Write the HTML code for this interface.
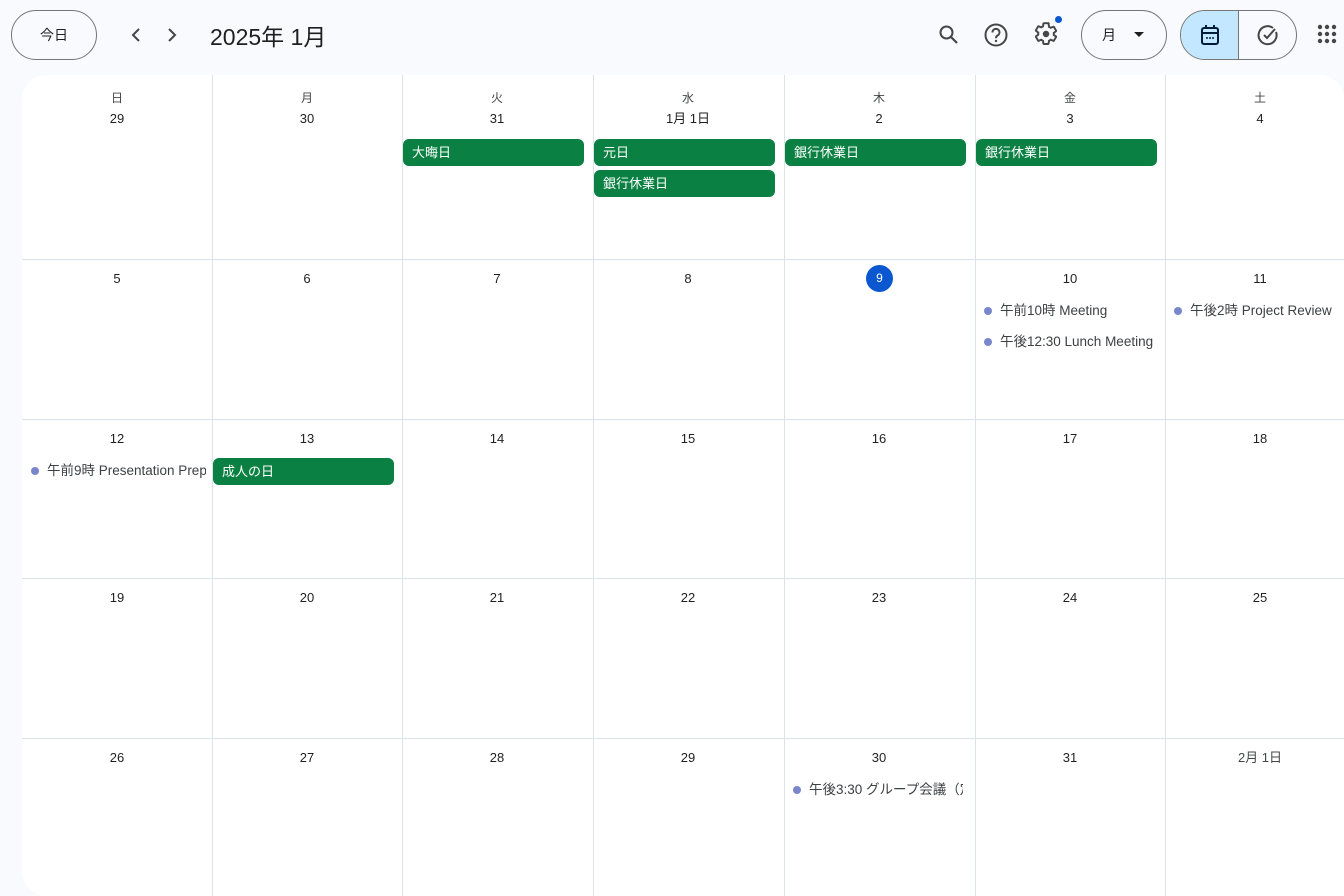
<!DOCTYPE html>
<html><head><meta charset="utf-8"><style>
*{margin:0;padding:0;box-sizing:border-box}
body{width:1344px;height:896px;overflow:hidden;background:#f8fafd;font-family:"Liberation Sans","Noto Sans CJK JP",sans-serif;color:#1f1f1f;position:relative}
.abs{position:absolute}
.btn{position:absolute;border:1px solid #747775;border-radius:26px;background:#f8fafd;display:flex;align-items:center;justify-content:center;font-size:14px;color:#1f1f1f}
.card{position:absolute;left:22px;top:75px;width:1322px;height:821px;background:#fff;border-radius:24px 24px 0 24px;overflow:hidden}
.vl{position:absolute;top:0;bottom:0;width:1px;background:#dde3ea}
.hl{position:absolute;left:0;right:0;height:1px;background:#dde3ea}
.wd{position:absolute;font-size:12px;color:#444746;text-align:center;width:190px;line-height:16px;height:16px}
.dn{position:absolute;font-size:13px;color:#1f1f1f;text-align:center;width:190px;line-height:16px;height:16px}
.chip{position:absolute;height:27px;width:181px;background:#0b8043;border-radius:6px;color:#fff;font-size:13px;line-height:27px;padding-left:9px;white-space:nowrap}
.ev{position:absolute;font-size:13.5px;color:#3c4043;white-space:nowrap;overflow:hidden;height:20px;line-height:20px;padding-left:16px}
.ev:before{content:"";position:absolute;left:0;top:6px;width:8px;height:8px;border-radius:50%;background:#7986cb}
</style></head><body>
<div class="btn" style="left:11px;top:10px;width:86px;height:50px">今日</div>
<svg class="abs" style="left:128px;top:26px" width="16" height="18" viewBox="0 0 16 18"><path d="M11 3 L5 9 L11 15" fill="none" stroke="#444746" stroke-width="2"/></svg>
<svg class="abs" style="left:164px;top:26px" width="16" height="18" viewBox="0 0 16 18"><path d="M5 3 L11 9 L5 15" fill="none" stroke="#444746" stroke-width="2"/></svg>
<div class="abs" style="left:210px;top:18px;font-size:23px;color:#1f1f1f">2025年 1月</div>
<svg class="abs" style="left:937px;top:23px" width="24" height="24" viewBox="0 0 24 24"><circle cx="9.5" cy="9.5" r="6" fill="none" stroke="#444746" stroke-width="2"/><path d="M14 14 L20 20" stroke="#444746" stroke-width="2.2"/></svg>
<svg class="abs" style="left:983px;top:22px" width="26" height="26" viewBox="0 0 26 26"><circle cx="13" cy="13" r="10.5" fill="none" stroke="#444746" stroke-width="2"/><path d="M9.5 10.5 a3.5 3.5 0 1 1 5 3 c-1.3.8-1.5 1.5-1.5 2.8" fill="none" stroke="#444746" stroke-width="2"/><circle cx="13" cy="19" r="1.2" fill="#444746"/></svg>
<svg class="abs" style="left:1033px;top:21px" width="26" height="26" viewBox="0 0 24 24"><path d="M19.14 12.94c.04-.3.06-.61.06-.94s-.02-.64-.07-.94l2.03-1.58a.5.5 0 0 0 .12-.61l-1.920-3.32a.5.5 0 0 0-.59-.22l-2.39.96a7 7 0 0 0-1.620-.94l-.36-2.54A.48.48 0 0 0 13.92 2h-3.84a.48.48 0 0 0-.48.41l-.36 2.54c-.59.24-1.13.57-1.62.94l-2.39-.96a.5.5 0 0 0-.59.22L2.72 8.47a.47.47 0 0 0 .12.61l2.03 1.58c-.05.3-.07.63-.07.94s.02.64.07.94l-2.03 1.58a.5.5 0 0 0-.12.61l1.92 3.32c.12.22.37.29.59.22l2.39-.96c.5.38 1.03.7 1.62.94l.36 2.54c.05.24.24.41.48.41h3.84c.24 0 .44-.17.47-.41l.36-2.54c.59-.24 1.13-.56 1.62-.94l2.39.96c.22.08.47 0 .59-.22l1.92-3.32a.47.47 0 0 0-.12-.61z" fill="none" stroke="#444746" stroke-width="1.8"/><circle cx="12" cy="12" r="3" fill="#444746"/></svg>
<div class="abs" style="left:1055px;top:16px;width:7px;height:7px;border-radius:50%;background:#0b57d0"></div>
<div class="btn" style="left:1081px;top:10px;width:86px;height:50px;justify-content:flex-start;padding-left:20px">月<svg style="margin-left:18px" width="10" height="6" viewBox="0 0 10 6"><path d="M0 0 L10 0 L5 5Z" fill="#1f1f1f"/></svg></div>
<div class="abs" style="left:1180px;top:10px;width:117px;height:50px;border:1px solid #747775;border-radius:26px;overflow:hidden;display:flex">
<div style="width:58px;height:100%;background:#c2e7ff;border-right:1px solid #747775;display:flex;align-items:center;justify-content:center"><svg width="20" height="22" viewBox="0 0 20 22"><rect x="2" y="4" width="16" height="16" rx="2" fill="none" stroke="#001d35" stroke-width="2"/><path d="M2 9 H18 M6 1 V5 M14 1 V5" stroke="#001d35" stroke-width="2"/><circle cx="7" cy="14" r="1" fill="#001d35"/><circle cx="10" cy="14" r="1" fill="#001d35"/><circle cx="13" cy="14" r="1" fill="#001d35"/></svg></div>
<div style="flex:1;display:flex;align-items:center;justify-content:center"><svg width="22" height="22" viewBox="0 0 22 22"><path d="M19 8 A9 9 0 1 1 16 4" fill="none" stroke="#444746" stroke-width="2"/><path d="M7 11 L10 14 L18 5" fill="none" stroke="#444746" stroke-width="2"/></svg></div></div>
<svg class="abs" style="left:1317px;top:24px" width="20" height="20" viewBox="0 0 20 20" fill="#444746"><circle cx="3" cy="3" r="2.2"/><circle cx="10" cy="3" r="2.2"/><circle cx="17" cy="3" r="2.2"/><circle cx="3" cy="10" r="2.2"/><circle cx="10" cy="10" r="2.2"/><circle cx="17" cy="10" r="2.2"/><circle cx="3" cy="17" r="2.2"/><circle cx="10" cy="17" r="2.2"/><circle cx="17" cy="17" r="2.2"/></svg>

<div class="card">
<div class="vl" style="left:190px"></div><div class="vl" style="left:380px"></div><div class="vl" style="left:571px"></div><div class="vl" style="left:762px"></div><div class="vl" style="left:953px"></div><div class="vl" style="left:1143px"></div>
<div class="hl" style="top:184px"></div><div class="hl" style="top:344px"></div><div class="hl" style="top:503px"></div><div class="hl" style="top:663px"></div>

<div class="wd" style="left:0;top:15px">日</div><div class="wd" style="left:190px;top:15px">月</div><div class="wd" style="left:380px;top:15px">火</div><div class="wd" style="left:571px;top:15px">水</div><div class="wd" style="left:762px;top:15px">木</div><div class="wd" style="left:953px;top:15px">金</div><div class="wd" style="left:1143px;top:15px">土</div>

<div class="dn" style="left:0;top:36px">29</div><div class="dn" style="left:190px;top:36px">30</div><div class="dn" style="left:380px;top:36px">31</div><div class="dn" style="left:571px;top:36px">1月 1日</div><div class="dn" style="left:762px;top:36px">2</div><div class="dn" style="left:953px;top:36px">3</div><div class="dn" style="left:1143px;top:36px">4</div>
<div class="chip" style="left:381px;top:64px">大晦日</div>
<div class="chip" style="left:572px;top:64px">元日</div>
<div class="chip" style="left:572px;top:95px">銀行休業日</div>
<div class="chip" style="left:763px;top:64px">銀行休業日</div>
<div class="chip" style="left:954px;top:64px">銀行休業日</div>

<div class="dn" style="left:0;top:196px">5</div><div class="dn" style="left:190px;top:196px">6</div><div class="dn" style="left:380px;top:196px">7</div><div class="dn" style="left:571px;top:196px">8</div>
<div class="abs" style="left:844px;top:190px;width:27px;height:27px;border-radius:50%;background:#0b57d0;color:#fff;font-size:12px;text-align:center;line-height:27px">9</div>
<div class="dn" style="left:953px;top:196px">10</div><div class="dn" style="left:1143px;top:196px">11</div>
<div class="ev" style="left:962px;top:226px;width:172px">午前10時 Meeting</div>
<div class="ev" style="left:962px;top:257px;width:172px">午後12:30 Lunch Meeting</div>
<div class="ev" style="left:1152px;top:226px;width:175px">午後2時 Project Review</div>

<div class="dn" style="left:0;top:356px">12</div><div class="dn" style="left:190px;top:356px">13</div><div class="dn" style="left:380px;top:356px">14</div><div class="dn" style="left:571px;top:356px">15</div><div class="dn" style="left:762px;top:356px">16</div><div class="dn" style="left:953px;top:356px">17</div><div class="dn" style="left:1143px;top:356px">18</div>
<div class="ev" style="left:9px;top:386px;width:175px">午前9時 Presentation Prep</div>
<div class="chip" style="left:191px;top:383px">成人の日</div>

<div class="dn" style="left:0;top:515px">19</div><div class="dn" style="left:190px;top:515px">20</div><div class="dn" style="left:380px;top:515px">21</div><div class="dn" style="left:571px;top:515px">22</div><div class="dn" style="left:762px;top:515px">23</div><div class="dn" style="left:953px;top:515px">24</div><div class="dn" style="left:1143px;top:515px">25</div>

<div class="dn" style="left:0;top:675px">26</div><div class="dn" style="left:190px;top:675px">27</div><div class="dn" style="left:380px;top:675px">28</div><div class="dn" style="left:571px;top:675px">29</div><div class="dn" style="left:762px;top:675px">30</div><div class="dn" style="left:953px;top:675px">31</div><div class="dn" style="left:1143px;top:675px;color:#444746">2月 1日</div>
<div class="ev" style="left:771px;top:705px;width:170px">午後3:30 グループ会議（定例）</div>
</div>
</body></html>
